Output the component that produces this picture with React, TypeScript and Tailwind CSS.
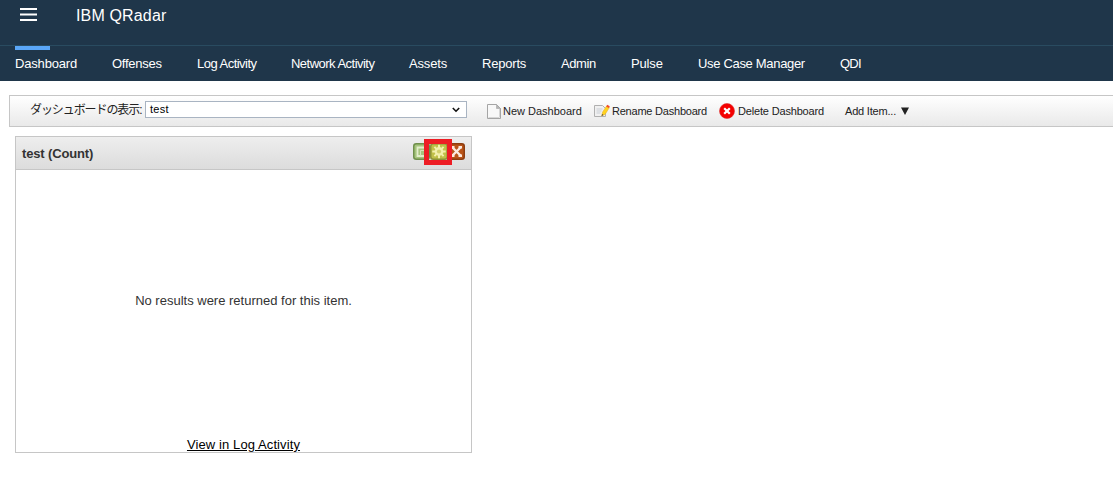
import { clsx } from 'clsx'

const TABS = [
  { label: 'Dashboard', width: 'w-[97px]', tracking: 'tracking-[-0.18px]' },
  { label: 'Offenses', width: 'w-[85px]', tracking: 'tracking-[-0.25px]' },
  { label: 'Log Activity', width: 'w-[94px]', tracking: 'tracking-[-0.52px]' },
  { label: 'Network Activity', width: 'w-[118px]', tracking: 'tracking-[-0.52px]' },
  { label: 'Assets', width: 'w-[73px]', tracking: 'tracking-[-0.15px]' },
  { label: 'Reports', width: 'w-[79px]', tracking: 'tracking-[-0.2px]' },
  { label: 'Admin', width: 'w-[70px]', tracking: 'tracking-[-0.4px]' },
  { label: 'Pulse', width: 'w-[67px]', tracking: 'tracking-[-0.15px]' },
  { label: 'Use Case Manager', width: 'w-[142px]', tracking: 'tracking-[-0.32px]' },
  { label: 'QDI', width: 'w-[60px]', tracking: 'tracking-[-0.8px]' },
]

function PageIcon() {
  return (
    <svg width="14" height="16" viewBox="0 0 14 16" className="shrink-0">
      <path d="M.5 1.5h9l4 4v10H.5z" fill="#f8f8f8" stroke="#a5a5a5" />
      <path d="M1.5 14.5h11M12.5 6v8" stroke="#d6d6d6" />
      <path d="M9.5 1.5v4h4z" fill="#b5b5b5" stroke="#a5a5a5" strokeWidth=".6" />
    </svg>
  )
}

function RenameIcon() {
  return (
    <svg width="16" height="16" viewBox="0 0 16 16" className="shrink-0">
      <path d="M.5 2.5h8l3 3v8H.5z" fill="#f0f0f0" stroke="#b0b0b0" />
      <path d="M2.5 6h6M2.5 8h5M2.5 10h4" stroke="#c9ced5" />
      <path d="M7.6 13 8.6 9 12.6 3l2.8 1.6-4.2 6.6z" fill="#ffd21f" stroke="#e8ac1c" strokeWidth=".5" />
      <path d="m12.2 3.6 1-1.9 2.6 1.5-1 1.9z" fill="#f04a2a" />
      <path d="m7.6 13 .5-2.1 1.4 1z" fill="#444" />
    </svg>
  )
}

function DeleteIcon() {
  return (
    <svg width="16" height="16" viewBox="0 0 16 16" className="shrink-0">
      <circle cx="8" cy="8" r="7.5" fill="#f40000" stroke="#dc3030" strokeWidth=".6" />
      <path d="m5.2 5.2 5.6 5.6m0-5.6-5.6 5.6" stroke="#fff" strokeWidth="2.2" />
    </svg>
  )
}

function DetachIcon() {
  return (
    <svg width="17" height="17" viewBox="0 0 17 17">
      <rect x=".75" y=".75" width="15.5" height="15.5" rx="2.5" fill="#a5c47c" stroke="#6f8f4b" strokeWidth="1.5" />
      <path d="M12 4.5H4.5V13H12" fill="none" stroke="#e3eecb" strokeWidth="1.8" />
      <path d="M12 7.5H7.5V13" fill="none" stroke="#d5e4b8" />
    </svg>
  )
}

function GearIcon() {
  return (
    <svg width="18" height="17" viewBox="0 0 18 17">
      <rect x=".75" y=".75" width="16.5" height="15.5" rx="2.5" fill="#c0c048" stroke="#8e9238" strokeWidth="1.5" />
      <path d="M9 1.8v13.4M2.3 8.5h13.4M4.4 3.9l9.2 9.2M13.6 3.9l-9.2 9.2" stroke="#f3f0ac" strokeWidth="2" />
      <circle cx="9" cy="8.5" r="4.4" fill="#f3f0ac" />
      <circle cx="9" cy="8.5" r="2.1" fill="#d3d06c" />
    </svg>
  )
}

function CloseIcon() {
  return (
    <svg width="17" height="17" viewBox="0 0 17 17">
      <rect x=".75" y=".75" width="15.5" height="15.5" rx="2.5" fill="#b95418" stroke="#8d3d10" strokeWidth="1.5" />
      <path d="m4 4 9 9m0-9-9 9" stroke="#fbe9df" strokeWidth="2.4" />
      <path d="M3 3h3.5v2.5H3zm7.5 0H14v2.5h-3.5zM3 11.5h3.5V14H3zm7.5 0H14V14h-3.5z" fill="#fbe9df" />
    </svg>
  )
}

function Header() {
  return (
    <header className="h-[81px] bg-[#1f364a] text-white">
      <div className="flex h-[46px] items-start border-b border-[#294b60] pl-5">
        <svg width="17" height="13" viewBox="0 0 17 13" className="mt-2">
          <path d="M0 1h17M0 6.5h17M0 12h17" stroke="#fff" strokeWidth="2" />
        </svg>
        <h1 className="ml-[39px] mt-[6px] text-[16px] leading-5 tracking-[0.15px]">IBM QRadar</h1>
      </div>
      <nav className="flex pl-[15px] text-[13px]">
        {TABS.map((tab, i) => (
          <div key={tab.label} className={clsx('shrink-0 whitespace-nowrap', tab.width, tab.tracking)}>
            <div className={clsx('h-1 w-[35px]', i === 0 && 'bg-[#5aa7f8]')} />
            <div className="pt-[6px] leading-4">{tab.label}</div>
          </div>
        ))}
      </nav>
    </header>
  )
}

function Toolbar() {
  return (
    <div className="ml-[9px] mt-[14px] flex h-8 items-center border border-r-0 border-[#c6c6c6] bg-linear-to-b from-white to-[#e9e9e9] pl-5 text-[11px] text-[#222]">
      <span className="mb-[3px] w-[115px] shrink-0 whitespace-nowrap text-[12px] tracking-[-1.08px]">ダッシュボードの表示:</span>
      <div className="mb-[3px] flex h-[17px] w-[322px] shrink-0 items-center justify-between border border-[#a9b4c2] bg-white pl-1 pr-[6px] text-black">
        <span className="tracking-[0.25px]">test</span>
        <svg width="8" height="6" viewBox="0 0 8 6">
          <path d="m.8 1 3.2 3.2L7.2 1" fill="none" stroke="#111" strokeWidth="1.6" />
        </svg>
      </div>
      <div className="ml-5 flex w-[107px] shrink-0 items-center gap-[2px] whitespace-nowrap">
        <PageIcon />
        <span>New Dashboard</span>
      </div>
      <div className="flex w-[125px] shrink-0 items-center gap-[2px] whitespace-nowrap">
        <RenameIcon />
        <span className="tracking-[-0.22px]">Rename Dashboard</span>
      </div>
      <div className="flex w-[126px] shrink-0 items-center gap-[3px] whitespace-nowrap">
        <DeleteIcon />
        <span className="tracking-[-0.17px]">Delete Dashboard</span>
      </div>
      <div className="flex items-center gap-[5px] whitespace-nowrap">
        <span className="tracking-[-0.2px]">Add Item...</span>
        <svg width="8" height="8" viewBox="0 0 8 8">
          <path d="M0 .5h8L4 8z" fill="#222" />
        </svg>
      </div>
    </div>
  )
}

function DashboardItem() {
  return (
    <section className="ml-[15px] mt-[9px] flex h-[317px] w-[457px] flex-col border border-[#c6c6c6] bg-white">
      <div className="flex h-[33px] shrink-0 items-center justify-between border-b border-[#c6c6c6] bg-linear-to-b from-[#eee] to-[#dcdcdc] pl-[6px] pr-[6px]">
        <h2 className="mt-[2px] text-[13px] font-bold tracking-[-0.15px] text-[#333]">test (Count)</h2>
        <div className="relative mb-[3px] flex h-[17px] items-center">
          <DetachIcon />
          <GearIcon />
          <CloseIcon />
          <div className="absolute -top-1 left-[11px] h-[26px] w-[28px] border-[5px] border-[#ed1c24]" />
        </div>
      </div>
      <div className="flex flex-1 items-center justify-center text-[13px] text-[#333]">
        <p className="mb-[5px] whitespace-nowrap">No results were returned for this item.</p>
      </div>
      <a className="-mb-px shrink-0 text-center text-[13px] leading-4 tracking-[0.1px] text-black underline">View in Log Activity</a>
    </section>
  )
}

export default function App() {
  return (
    <div className="h-[504px] w-[1113px] overflow-hidden bg-white font-['Liberation_Sans','Noto_Sans_CJK_JP',sans-serif]">
      <Header />
      <Toolbar />
      <DashboardItem />
    </div>
  )
}
